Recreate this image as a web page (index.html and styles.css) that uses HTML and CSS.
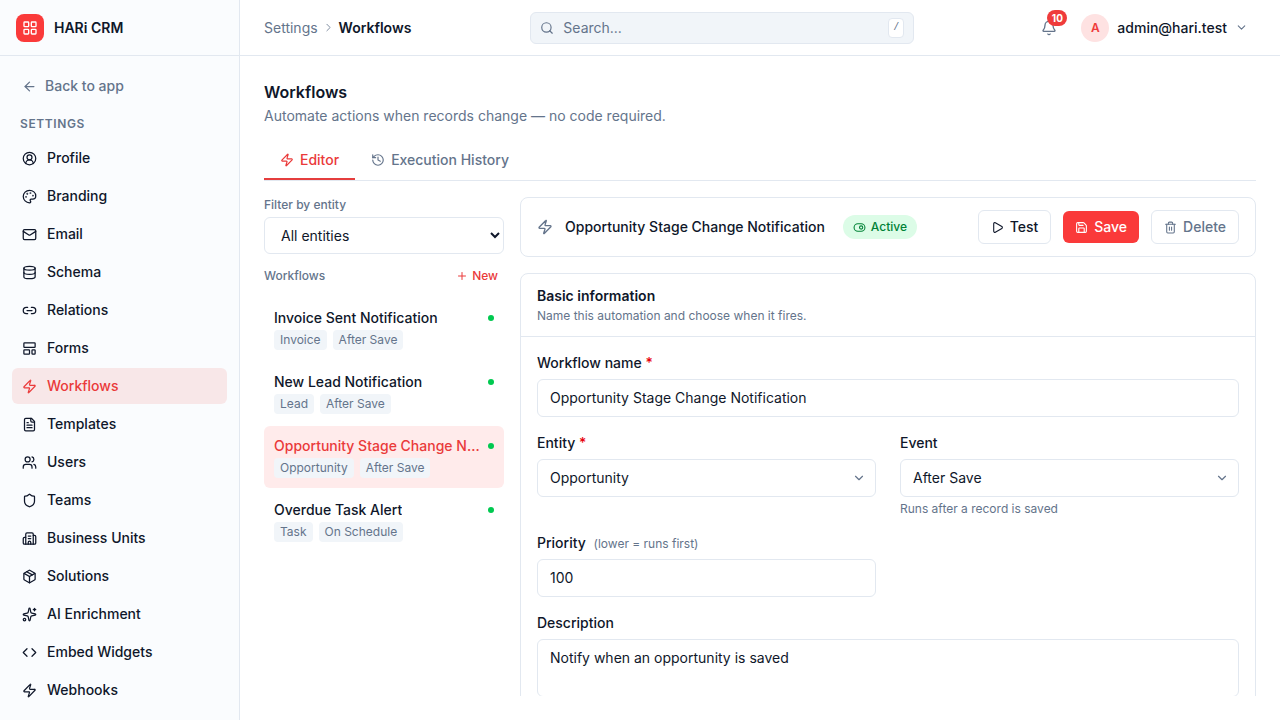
FILE: index.html
```html
<!DOCTYPE html>
<html lang="en">
<head>
<meta charset="UTF-8">
<meta name="viewport" content="width=device-width, initial-scale=1.0">
<title>Workflows - HARi CRM</title>
<link rel="stylesheet" href="styles.css">
</head>
<body>

<!-- Icon sprite -->
<svg class="sprite" aria-hidden="true">
  <symbol id="i-grid" viewBox="0 0 24 24"><rect x="3" y="3" width="7" height="7" rx="1"/><rect x="14" y="3" width="7" height="7" rx="1"/><rect x="14" y="14" width="7" height="7" rx="1"/><rect x="3" y="14" width="7" height="7" rx="1"/></symbol>
  <symbol id="i-arrow-left" viewBox="0 0 24 24"><path d="m12 19-7-7 7-7"/><path d="M19 12H5"/></symbol>
  <symbol id="i-profile" viewBox="0 0 24 24"><path d="M18 20a6 6 0 0 0-12 0"/><circle cx="12" cy="10" r="4"/><circle cx="12" cy="12" r="10"/></symbol>
  <symbol id="i-palette" viewBox="0 0 24 24"><path d="M12 22a1 1 0 0 1 0-20 10 9 0 0 1 10 9 5 5 0 0 1-5 5h-2.25a1.75 1.75 0 0 0-1.4 2.8l.3.4a1.75 1.75 0 0 1-1.4 2.8z"/><circle cx="13.5" cy="6.5" r=".5"/><circle cx="17.5" cy="10.5" r=".5"/><circle cx="6.5" cy="12.5" r=".5"/><circle cx="8.5" cy="7.5" r=".5"/></symbol>
  <symbol id="i-mail" viewBox="0 0 24 24"><rect x="2" y="4" width="20" height="16" rx="2"/><path d="m22 7-8.99 5.73a2 2 0 0 1-2.02 0L2 7"/></symbol>
  <symbol id="i-database" viewBox="0 0 24 24"><ellipse cx="12" cy="5" rx="9" ry="3"/><path d="M3 5v14a9 3 0 0 0 18 0V5"/><path d="M3 12a9 3 0 0 0 18 0"/></symbol>
  <symbol id="i-link" viewBox="0 0 24 24"><path d="M9 17H7A5 5 0 0 1 7 7h2"/><path d="M15 7h2a5 5 0 1 1 0 10h-2"/><path d="M8 12h8"/></symbol>
  <symbol id="i-forms" viewBox="0 0 24 24"><rect x="3" y="3" width="18" height="7" rx="1"/><rect x="3" y="14" width="9" height="7" rx="1"/><rect x="16" y="14" width="5" height="7" rx="1"/></symbol>
  <symbol id="i-zap" viewBox="0 0 24 24"><path d="M4 14a1 1 0 0 1-.78-1.63l9.9-10.2a.5.5 0 0 1 .86.46l-1.92 6.02A1 1 0 0 0 13 10h7a1 1 0 0 1 .78 1.63l-9.9 10.2a.5.5 0 0 1-.86-.46l1.92-6.02A1 1 0 0 0 11 14z"/></symbol>
  <symbol id="i-file" viewBox="0 0 24 24"><path d="M15 2H6a2 2 0 0 0-2 2v16a2 2 0 0 0 2 2h12a2 2 0 0 0 2-2V7z"/><path d="M14 2v4a2 2 0 0 0 2 2h4"/><path d="M10 9H8"/><path d="M16 13H8"/><path d="M16 17H8"/></symbol>
  <symbol id="i-users" viewBox="0 0 24 24"><path d="M16 21v-2a4 4 0 0 0-4-4H6a4 4 0 0 0-4 4v2"/><circle cx="9" cy="7" r="4"/><path d="M22 21v-2a4 4 0 0 0-3-3.87"/><path d="M16 3.13a4 4 0 0 1 0 7.75"/></symbol>
  <symbol id="i-shield" viewBox="0 0 24 24"><path d="M20 13c0 5-3.5 7.5-7.66 8.95a1 1 0 0 1-.67-.01C7.5 20.5 4 18 4 13V6a1 1 0 0 1 1-1c2 0 4.5-1.2 6.24-2.72a1.17 1.17 0 0 1 1.52 0C14.51 3.81 17 5 19 5a1 1 0 0 1 1 1z"/></symbol>
  <symbol id="i-building" viewBox="0 0 24 24"><path d="M10 12h4"/><path d="M10 8h4"/><path d="M14 21v-3a2 2 0 0 0-4 0v3"/><path d="M6 10H4a2 2 0 0 0-2 2v7a2 2 0 0 0 2 2h16a2 2 0 0 0 2-2V9a2 2 0 0 0-2-2h-2"/><path d="M6 21V5a2 2 0 0 1 2-2h8a2 2 0 0 1 2 2v16"/></symbol>
  <symbol id="i-package" viewBox="0 0 24 24"><path d="M11 21.73a2 2 0 0 0 2 0l7-4A2 2 0 0 0 21 16V8a2 2 0 0 0-1-1.73l-7-4a2 2 0 0 0-2 0l-7 4A2 2 0 0 0 3 8v8a2 2 0 0 0 1 1.73z"/><path d="M12 22V12"/><path d="M3.29 7 12 12l8.71-5"/><path d="m7.5 4.27 9 5.15"/></symbol>
  <symbol id="i-sparkles" viewBox="0 0 24 24"><path d="M11.017 2.814a1 1 0 0 1 1.966 0l1.051 5.558a2 2 0 0 0 1.594 1.594l5.558 1.051a1 1 0 0 1 0 1.966l-5.558 1.051a2 2 0 0 0-1.594 1.594l-1.051 5.558a1 1 0 0 1-1.966 0l-1.051-5.558a2 2 0 0 0-1.594-1.594l-5.558-1.051a1 1 0 0 1 0-1.966l5.558-1.051a2 2 0 0 0 1.594-1.594z"/><path d="M20 2v4"/><path d="M22 4h-4"/><circle cx="4" cy="20" r="2"/></symbol>
  <symbol id="i-code" viewBox="0 0 24 24"><path d="m16 18 6-6-6-6"/><path d="m8 6-6 6 6 6"/></symbol>
  <symbol id="i-chevron-right" viewBox="0 0 24 24"><path d="m9 18 6-6-6-6"/></symbol>
  <symbol id="i-chevron-down" viewBox="0 0 24 24"><path d="m6 9 6 6 6-6"/></symbol>
  <symbol id="i-search" viewBox="0 0 24 24"><circle cx="11" cy="11" r="8"/><path d="m21 21-4.34-4.34"/></symbol>
  <symbol id="i-bell" viewBox="0 0 24 24"><path d="M10.27 21a2 2 0 0 0 3.46 0"/><path d="M3.26 15.33A1 1 0 0 0 4 17h16a1 1 0 0 0 .74-1.67C19.41 13.96 18 12.5 18 8A6 6 0 0 0 6 8c0 4.5-1.41 5.96-2.74 7.33"/></symbol>
  <symbol id="i-history" viewBox="0 0 24 24"><path d="M3 12a9 9 0 1 0 9-9 9.75 9.75 0 0 0-6.74 2.74L3 8"/><path d="M3 3v5h5"/><path d="M12 7v5l4 2"/></symbol>
  <symbol id="i-plus" viewBox="0 0 24 24"><path d="M5 12h14"/><path d="M12 5v14"/></symbol>
  <symbol id="i-toggle" viewBox="0 0 24 24"><circle cx="15" cy="12" r="3"/><rect x="2" y="5" width="20" height="14" rx="7"/></symbol>
  <symbol id="i-play" viewBox="0 0 24 24"><path d="M5 5a2 2 0 0 1 3.01-1.73l12 7a2 2 0 0 1 0 3.46l-12 7A2 2 0 0 1 5 19z"/></symbol>
  <symbol id="i-save" viewBox="0 0 24 24"><path d="M15.2 3a2 2 0 0 1 1.4.6l3.8 3.8a2 2 0 0 1 .6 1.4V19a2 2 0 0 1-2 2H5a2 2 0 0 1-2-2V5a2 2 0 0 1 2-2z"/><path d="M17 21v-7a1 1 0 0 0-1-1H8a1 1 0 0 0-1 1v7"/><path d="M7 3v4a1 1 0 0 0 1 1h7"/></symbol>
  <symbol id="i-trash" viewBox="0 0 24 24"><path d="M10 11v6"/><path d="M14 11v6"/><path d="M19 6v14a2 2 0 0 1-2 2H7a2 2 0 0 1-2-2V6"/><path d="M3 6h18"/><path d="M8 6V4a2 2 0 0 1 2-2h4a2 2 0 0 1 2 2v2"/></symbol>
</svg>

<div class="app">
  <aside class="sidebar">
    <div class="brand">
      <span class="brand-logo"><svg class="icon icon-md"><use href="#i-grid"/></svg></span>
      <span class="brand-name">HARi CRM</span>
    </div>
    <nav class="nav">
      <a href="#" class="nav-back"><svg class="icon icon-nav"><use href="#i-arrow-left"/></svg>Back to app</a>
      <div class="nav-title">SETTINGS</div>
      <ul class="nav-list">
        <li><a href="#" class="nav-item"><svg class="icon icon-nav"><use href="#i-profile"/></svg>Profile</a></li>
        <li><a href="#" class="nav-item"><svg class="icon icon-nav"><use href="#i-palette"/></svg>Branding</a></li>
        <li><a href="#" class="nav-item"><svg class="icon icon-nav"><use href="#i-mail"/></svg>Email</a></li>
        <li><a href="#" class="nav-item"><svg class="icon icon-nav"><use href="#i-database"/></svg>Schema</a></li>
        <li><a href="#" class="nav-item"><svg class="icon icon-nav"><use href="#i-link"/></svg>Relations</a></li>
        <li><a href="#" class="nav-item"><svg class="icon icon-nav"><use href="#i-forms"/></svg>Forms</a></li>
        <li><a href="#" class="nav-item active"><svg class="icon icon-nav"><use href="#i-zap"/></svg>Workflows</a></li>
        <li><a href="#" class="nav-item"><svg class="icon icon-nav"><use href="#i-file"/></svg>Templates</a></li>
        <li><a href="#" class="nav-item"><svg class="icon icon-nav"><use href="#i-users"/></svg>Users</a></li>
        <li><a href="#" class="nav-item"><svg class="icon icon-nav"><use href="#i-shield"/></svg>Teams</a></li>
        <li><a href="#" class="nav-item"><svg class="icon icon-nav"><use href="#i-building"/></svg>Business Units</a></li>
        <li><a href="#" class="nav-item"><svg class="icon icon-nav"><use href="#i-package"/></svg>Solutions</a></li>
        <li><a href="#" class="nav-item"><svg class="icon icon-nav"><use href="#i-sparkles"/></svg>AI Enrichment</a></li>
        <li><a href="#" class="nav-item"><svg class="icon icon-nav"><use href="#i-code"/></svg>Embed Widgets</a></li>
        <li><a href="#" class="nav-item"><svg class="icon icon-nav"><use href="#i-zap"/></svg>Webhooks</a></li>
      </ul>
    </nav>
  </aside>

  <div class="page">
    <header class="topbar">
      <div class="breadcrumb">
        <a href="#">Settings</a>
        <svg class="icon icon-btn icon-thin"><use href="#i-chevron-right"/></svg>
        <span class="current">Workflows</span>
      </div>
      <div class="search">
        <svg class="icon icon-sm"><use href="#i-search"/></svg>
        <input type="text" class="search-input" placeholder="Search..." aria-label="Search">
        <kbd>/</kbd>
      </div>
      <div class="topbar-right">
        <button class="bell" aria-label="Notifications">
          <svg class="icon icon-md"><use href="#i-bell"/></svg>
          <span class="bell-badge">10</span>
        </button>
        <button class="user">
          <span class="avatar">A</span>
          <span>admin@hari.test</span>
          <svg class="icon icon-btn"><use href="#i-chevron-down"/></svg>
        </button>
      </div>
    </header>

    <main class="main">
      <h1 class="page-title">Workflows</h1>
      <p class="page-sub">Automate actions when records change — no code required.</p>

      <div class="tabs">
        <button class="tab active"><svg class="icon icon-sm"><use href="#i-zap"/></svg>Editor</button>
        <button class="tab"><svg class="icon icon-sm"><use href="#i-history"/></svg>Execution History</button>
      </div>

      <div class="workspace">
        <!-- Workflow list -->
        <section class="list-panel">
          <label for="entityFilter" class="small-label">Filter by entity</label>
          <select id="entityFilter" class="filter-select">
            <option>All entities</option>
          </select>
          <div class="list-head">
            <span class="small-label">Workflows</span>
            <button class="new-button"><svg class="icon icon-xs"><use href="#i-plus"/></svg>New</button>
          </div>
          <div class="workflow-list">
            <button class="workflow">
              <span class="workflow-row"><span class="workflow-name">Invoice Sent Notification</span><span class="dot"></span></span>
              <span class="tags"><span class="tag">Invoice</span><span class="tag">After Save</span></span>
            </button>
            <button class="workflow">
              <span class="workflow-row"><span class="workflow-name">New Lead Notification</span><span class="dot"></span></span>
              <span class="tags"><span class="tag">Lead</span><span class="tag">After Save</span></span>
            </button>
            <button class="workflow active">
              <span class="workflow-row"><span class="workflow-name">Opportunity Stage Change Notification</span><span class="dot"></span></span>
              <span class="tags"><span class="tag">Opportunity</span><span class="tag">After Save</span></span>
            </button>
            <button class="workflow">
              <span class="workflow-row"><span class="workflow-name">Overdue Task Alert</span><span class="dot"></span></span>
              <span class="tags"><span class="tag">Task</span><span class="tag">On Schedule</span></span>
            </button>
          </div>
        </section>

        <!-- Editor -->
        <section class="editor">
          <div class="card editor-bar">
            <svg class="icon icon-md muted"><use href="#i-zap"/></svg>
            <h2 class="editor-title">Opportunity Stage Change Notification</h2>
            <button class="status"><svg class="icon icon-btn"><use href="#i-toggle"/></svg>Active</button>
            <div class="actions">
              <button class="btn"><svg class="icon icon-btn"><use href="#i-play"/></svg>Test</button>
              <button class="btn btn-primary"><svg class="icon icon-btn"><use href="#i-save"/></svg>Save</button>
              <button class="btn btn-muted"><svg class="icon icon-btn"><use href="#i-trash"/></svg>Delete</button>
            </div>
          </div>

          <div class="card">
            <div class="card-head">
              <h3>Basic information</h3>
              <p>Name this automation and choose when it fires.</p>
            </div>
            <form class="form">
              <div class="field full">
                <label for="wfName">Workflow name <span class="required">*</span></label>
                <input type="text" id="wfName" class="control" value="Opportunity Stage Change Notification">
              </div>
              <div class="field">
                <label for="wfEntity">Entity <span class="required">*</span></label>
                <div class="select-wrap">
                  <select id="wfEntity" class="control"><option>Opportunity</option></select>
                  <svg class="icon icon-sm"><use href="#i-chevron-down"/></svg>
                </div>
              </div>
              <div class="field">
                <label for="wfEvent">Event</label>
                <div class="select-wrap">
                  <select id="wfEvent" class="control"><option>After Save</option></select>
                  <svg class="icon icon-sm"><use href="#i-chevron-down"/></svg>
                </div>
                <p class="help">Runs after a record is saved</p>
              </div>
              <div class="field">
                <label for="wfPriority">Priority <span class="hint">(lower = runs first)</span></label>
                <input type="text" inputmode="numeric" id="wfPriority" class="control" value="100">
              </div>
              <div class="field full">
                <label for="wfDescription">Description</label>
                <textarea id="wfDescription" class="control" rows="2">Notify when an opportunity is saved</textarea>
              </div>
            </form>
          </div>
        </section>
      </div>
    </main>
  </div>
</div>

</body>
</html>
```
FILE: styles.css
```css
:root {
  --text: #0f172a;
  --muted: #64748b;
  --border: #e2e8f0;
  --soft: #f1f5f9;
  --primary: #fa3a3a;
  --primary-text: #ea3a3a;
}
* {
  box-sizing: border-box;
}
body {
  margin: 0;
  font-family: Inter, "Liberation Sans", sans-serif;
  font-size: 14px;
  line-height: 20px;
  color: var(--text);
  background: #fff;
}
h1, h2, h3, p, ul {
  margin: 0;
  padding: 0;
}
a {
  color: inherit;
  text-decoration: none;
}
button, input, select, textarea {
  font: inherit;
  color: inherit;
}
button {
  border: none;
  padding: 0;
  background: none;
  cursor: pointer;
}

/* Icons */
.sprite {
  display: none;
}
.icon {
  flex: none;
  fill: none;
  stroke: currentColor;
  stroke-width: 2;
  stroke-linecap: round;
  stroke-linejoin: round;
}
.icon-xs { width: 12px; height: 12px; }
.icon-btn { width: 13px; height: 13px; }
.icon-sm { width: 14px; height: 14px; }
.icon-nav { width: 15px; height: 15px; }
.icon-md { width: 16px; height: 16px; }
.icon-thin { stroke-width: 1.5; }
.muted { color: var(--muted); }

.app {
  display: flex;
  height: 100vh;
  overflow: hidden;
}

/* Sidebar */
.sidebar {
  flex: none;
  width: 240px;
  background: #fafcfe;
  border-right: 1px solid var(--border);
  overflow: hidden;
}
.brand {
  display: flex;
  align-items: center;
  gap: 10px;
  height: 56px;
  padding: 0 16px;
  border-bottom: 1px solid var(--border);
}
.brand-logo {
  display: flex;
  align-items: center;
  justify-content: center;
  width: 28px;
  height: 28px;
  border-radius: 8px;
  background: var(--primary);
  color: #fff;
}
.brand-name {
  font-weight: 600;
}
.nav {
  padding: 12px;
}
.nav-back, .nav-item {
  display: flex;
  align-items: center;
  height: 36px;
  padding: 0 10px;
  border-radius: 6px;
  font-weight: 500;
}
.nav-back {
  gap: 8px;
  color: var(--muted);
}
.nav-item {
  gap: 10px;
}
.nav-item.active {
  background: #f8e7e8;
  color: var(--primary-text);
}
.nav-title {
  padding: 12px 8px 8px;
  font-size: 12px;
  line-height: 16px;
  font-weight: 600;
  letter-spacing: 0.05em;
  color: var(--muted);
}
.nav-list {
  display: flex;
  flex-direction: column;
  gap: 2px;
  list-style: none;
}

/* Top bar */
.page {
  flex: 1;
  min-width: 0;
  display: flex;
  flex-direction: column;
}
.topbar {
  flex: none;
  display: flex;
  align-items: center;
  justify-content: space-between;
  height: 56px;
  padding: 0 24px;
  border-bottom: 1px solid var(--border);
}
.breadcrumb {
  display: flex;
  align-items: center;
  gap: 4px;
  color: var(--muted);
}
.breadcrumb .current {
  color: var(--text);
  font-weight: 600;
}
.search {
  display: flex;
  align-items: center;
  gap: 9px;
  width: 384px;
  height: 32px;
  padding: 0 9px;
  border: 1px solid var(--border);
  border-radius: 6px;
  background: var(--soft);
  color: var(--muted);
}
.search-input {
  flex: 1;
  min-width: 0;
  padding: 0;
  border: none;
  outline: none;
  background: none;
}
.search-input::placeholder {
  color: var(--muted);
}
.search kbd {
  padding: 0 4px;
  border: 1px solid var(--border);
  border-radius: 4px;
  background: #fff;
  font-family: "Liberation Mono", monospace;
  font-size: 10px;
  line-height: 18px;
}
.topbar-right {
  display: flex;
  align-items: center;
  gap: 8px;
}
.bell {
  position: relative;
  display: flex;
  align-items: center;
  justify-content: center;
  width: 32px;
  height: 32px;
  color: var(--muted);
}
.bell-badge {
  position: absolute;
  top: -2px;
  right: -2px;
  min-width: 20px;
  padding: 0 4px;
  border-radius: 8px;
  background: #ef3b3b;
  color: #fff;
  font-size: 10px;
  line-height: 16px;
  font-weight: 700;
}
.user {
  display: flex;
  align-items: center;
  gap: 8px;
  padding: 0 8px;
  font-weight: 500;
}
.user .icon {
  color: var(--muted);
}
.avatar {
  width: 28px;
  height: 28px;
  border-radius: 50%;
  background: #fee2e2;
  color: #ef3b3b;
  font-size: 12px;
  line-height: 28px;
  font-weight: 600;
}

/* Page */
.main {
  flex: 1;
  min-height: 0;
  display: flex;
  flex-direction: column;
  padding: 24px;
}
.page-title {
  font-size: 16px;
  line-height: 24px;
  font-weight: 600;
}
.page-sub {
  margin-top: 2px;
  color: var(--muted);
}
.tabs {
  flex: none;
  display: flex;
  margin-top: 14px;
  border-bottom: 1px solid var(--border);
}
.tab {
  display: flex;
  align-items: center;
  gap: 6px;
  padding: 10px 16px 8px;
  border-bottom: 2px solid transparent;
  color: var(--muted);
  font-weight: 500;
}
.tab.active {
  border-color: #e53e3e;
  color: var(--primary-text);
}
.workspace {
  flex: 1;
  min-height: 0;
  display: grid;
  grid-template-columns: 240px minmax(0, 1fr);
  gap: 16px;
  margin-top: 16px;
}

/* Workflow list */
.list-panel {
  display: flex;
  flex-direction: column;
}
.small-label {
  font-size: 12px;
  line-height: 16px;
  font-weight: 500;
  color: var(--muted);
}
.filter-select {
  width: 100%;
  height: 37px;
  margin-top: 4px;
  padding: 0 0 0 12px;
  border: 1px solid var(--border);
  border-radius: 6px;
  background: #fff;
}
.list-head {
  display: flex;
  align-items: center;
  justify-content: space-between;
  height: 24px;
  margin: 10px 0;
}
.new-button {
  display: flex;
  align-items: center;
  gap: 4px;
  padding: 4px 6px;
  font-size: 12px;
  line-height: 16px;
  font-weight: 500;
  color: var(--primary-text);
}
.workflow-list {
  display: flex;
  flex-direction: column;
  gap: 2px;
}
.workflow {
  display: flex;
  flex-direction: column;
  gap: 2px;
  padding: 10px;
  border-radius: 6px;
  text-align: left;
}
.workflow.active {
  background: #ffebeb;
}
.workflow-row {
  display: flex;
  align-items: center;
  justify-content: space-between;
  gap: 8px;
  width: 100%;
}
.workflow-name {
  overflow: hidden;
  text-overflow: ellipsis;
  white-space: nowrap;
  font-weight: 500;
}
.workflow.active .workflow-name {
  color: var(--primary-text);
}
.dot {
  flex: none;
  width: 6px;
  height: 6px;
  border-radius: 50%;
  background: #00c950;
}
.tags {
  display: flex;
  gap: 6px;
}
.tag {
  padding: 2px 6px;
  border-radius: 4px;
  background: var(--soft);
  color: var(--muted);
  font-size: 12px;
  line-height: 16px;
}

/* Editor */
.editor {
  display: flex;
  flex-direction: column;
  gap: 16px;
  overflow-y: auto;
  scrollbar-width: none;
}
.card {
  flex: none;
  border: 1px solid var(--border);
  border-radius: 8px;
  background: #fff;
}
.editor-bar {
  display: flex;
  align-items: center;
  gap: 12px;
  padding: 12px 16px;
}
.editor-title {
  padding-right: 6px;
  font-size: 14px;
  font-weight: 500;
}
.status {
  display: flex;
  align-items: center;
  gap: 5px;
  padding: 4px 10px;
  border-radius: 12px;
  background: #dcfce7;
  color: #008236;
  font-size: 12px;
  line-height: 16px;
  font-weight: 500;
}
.actions {
  display: flex;
  align-items: center;
  gap: 12px;
  margin-left: auto;
}
.btn {
  display: flex;
  align-items: center;
  gap: 6px;
  padding: 6px 12px;
  border: 1px solid var(--border);
  border-radius: 6px;
  font-weight: 500;
}
.btn-primary {
  border: none;
  background: var(--primary);
  color: #fff;
}
.btn-muted {
  color: var(--muted);
}
.card-head {
  padding: 12px 16px;
  border-bottom: 1px solid var(--border);
}
.card-head h3 {
  font-size: 14px;
  font-weight: 600;
}
.card-head p {
  margin-top: 2px;
  font-size: 12px;
  line-height: 16px;
  color: var(--muted);
}
.form {
  display: grid;
  grid-template-columns: 1fr 1fr;
  gap: 16px 24px;
  padding: 16px;
}
.full {
  grid-column: 1 / -1;
}
.field label {
  display: block;
  margin-bottom: 6px;
  font-weight: 500;
}
.required {
  color: #e7000b;
}
.hint {
  margin-left: 4px;
  font-size: 12px;
  line-height: 16px;
  font-weight: 400;
  color: var(--muted);
}
.control {
  display: block;
  width: 100%;
  padding: 8px 12px;
  border: 1px solid var(--border);
  border-radius: 6px;
  background: #fff;
  appearance: none;
}
textarea.control {
  resize: none;
}
.select-wrap {
  position: relative;
}
.select-wrap .icon {
  position: absolute;
  top: 12px;
  right: 10px;
  color: var(--muted);
  pointer-events: none;
}
.help {
  margin-top: 4px;
  font-size: 12px;
  line-height: 16px;
  color: var(--muted);
}
```
